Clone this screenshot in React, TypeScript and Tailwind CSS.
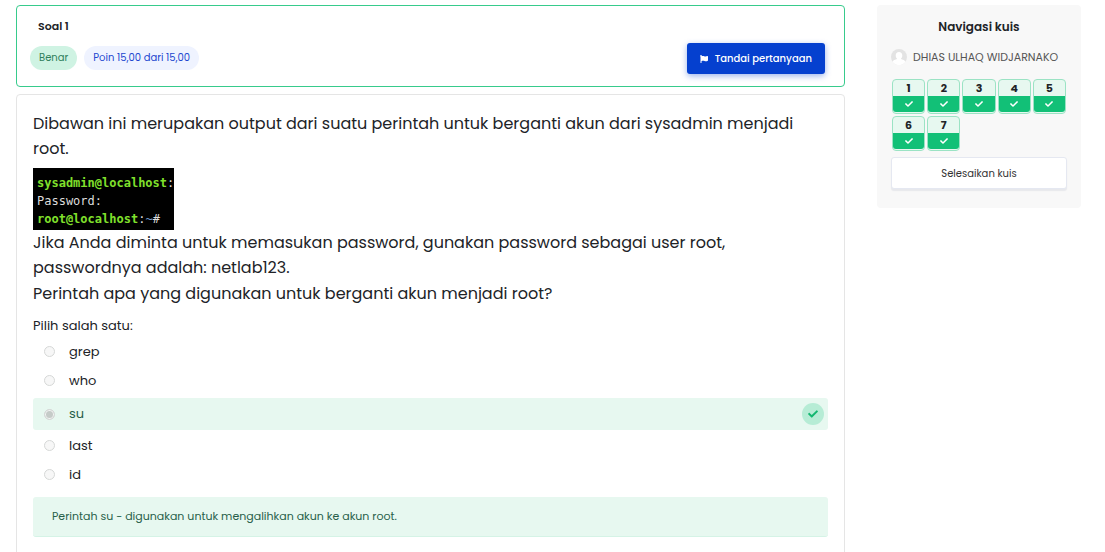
import React from "react";
import { FaCheck, FaFlag } from "react-icons/fa";

const options = ["grep", "who", "su", "last", "id"];
const answer = "su";
const questions = [1, 2, 3, 4, 5, 6, 7];

function QuestionInfo() {
  return (
    <header className="flex items-end justify-between rounded-[4px] border border-[#37cb8c] pt-3 pr-[19px] pb-3 pl-[13px]">
      <div className="pb-1">
        <h2 className="pl-2 text-[11px] leading-4 font-semibold">Soal 1</h2>
        <div className="mt-3 flex gap-[7px] text-[10px] leading-6">
          <span className="rounded-full bg-[#cff3e3] px-[9px] text-[#2f7f5c]">Benar</span>
          <span className="rounded-full bg-[#eff3ff] px-[9px] text-[#2347cf]">Poin 15,00 dari 15,00</span>
        </div>
      </div>
      <button
        type="button"
        className="flex h-[31px] items-center gap-[7px] rounded-[3px] bg-[#0540cf] px-[13px] text-[10px] font-medium text-white shadow-[0_2px_6px_rgba(5,64,207,0.4)]"
      >
        <FaFlag size={8} />
        Tandai pertanyaan
      </button>
    </header>
  );
}

function Terminal() {
  return (
    <div className="mt-[7px] h-[62px] w-[141px] overflow-hidden bg-black pt-[6px] pl-1 font-['DejaVu_Sans_Mono',monospace] text-[12px] leading-[18px] whitespace-nowrap text-[#dcdcdc]">
      <p>
        <b className="text-[#80e02c]">sysadmin@localhost</b>:
      </p>
      <p>Password:</p>
      <p>
        <b className="text-[#80e02c]">root@localhost</b>:<span className="text-[#7199c8]">~</span>#
      </p>
    </div>
  );
}

function Option({ text }: { text: string }) {
  const correct = text === answer;
  return (
    <label
      className={
        correct
          ? "mt-[3px] mb-px flex h-8 items-center rounded-[3px] bg-[#e7f8f0] pr-1 pl-[11px] text-[#285f4a]"
          : "flex h-[29px] items-center pl-[11px]"
      }
    >
      <input
        type="radio"
        name="answer"
        disabled
        defaultChecked={correct}
        className="size-[11px] appearance-none rounded-full border border-[#d6d8d7] bg-[#f7f7f7] checked:bg-[#c5cbc8] checked:shadow-[inset_0_0_0_1px_#f3f5f4]"
      />
      <span className="ml-[14px] flex-1">{text}</span>
      {correct && (
        <span className="flex size-[22px] items-center justify-center rounded-full bg-[#b6ecd5] text-[#12b76f]">
          <FaCheck size={10} />
        </span>
      )}
    </label>
  );
}

function Navigation() {
  return (
    <aside className="w-[204px] shrink-0 rounded-[4px] bg-[#f8f8f8] px-[14px] pt-[14px] pb-[19px]">
      <h2 className="text-center text-[12px] leading-4 font-semibold">Navigasi kuis</h2>
      <div className="mt-3 flex items-center gap-[6px] text-[11px] leading-5 whitespace-nowrap text-[#555]">
        <svg viewBox="0 0 16 16" className="size-4 shrink-0" aria-hidden="true">
          <circle cx="8" cy="8" r="8" fill="#e3e3e3" />
          <path d="M8 3c2 0 3.3 1.500 3.300 3.400 0 1.500-.7 2.700-1.500 3.400.5.9 3.800.8 4.600 3.100A8 8 0 0 1 1.600 12.900C2.400 10.600 5.700 10.700 6.200 9.800 5.400 9.100 4.700 7.900 4.700 6.400 4.700 4.500 6 3 8 3Z" fill="#fff" />
        </svg>
        DHIAS ULHAQ WIDJARNAKO
      </div>
      <nav className="mt-3 grid grid-cols-5 gap-[2px] pr-px pl-px">
        {questions.map((n) => (
          <a
            key={n}
            href={`#question-${n}`}
            className="flex h-[35px] flex-col rounded-[4px] border border-[#9be3c4] bg-[#e7f8f0] pb-px text-center text-[11px] leading-4 font-bold"
          >
            {n}
            <span className="flex flex-1 items-center justify-center rounded-b-[3px] bg-[#12c077] text-white">
              <FaCheck size={8} />
            </span>
          </a>
        ))}
      </nav>
      <button
        type="button"
        className="mt-[6px] h-8 w-full rounded-[3px] border border-[#e5e8f1] bg-white text-[10px] text-[#333] shadow-[0_2px_1px_#e7e8ec]"
      >
        Selesaikan kuis
      </button>
    </aside>
  );
}

export default function App() {
  return (
    <div className="flex h-screen items-start gap-8 overflow-hidden bg-white pt-[5px] pr-6 pl-4 font-[Poppins,Inter,sans-serif] text-[#212327]">
      <main className="min-w-0 flex-1">
        <QuestionInfo />
        <section className="mt-[7px] min-h-screen rounded-[4px] border border-[#e5e5e5] px-4 pt-4 pb-4">
          <div className="text-[16px] leading-[25px]">
            <p>Dibawan ini merupakan output dari suatu perintah untuk berganti akun dari sysadmin menjadi root.</p>
            <Terminal />
            <p>
              Jika Anda diminta untuk memasukan password, gunakan password sebagai user root,
              <br />
              passwordnya adalah: netlab123.
            </p>
            <p className="mt-px">Perintah apa yang digunakan untuk berganti akun menjadi root?</p>
          </div>
          <fieldset className="mt-[10px] text-[13px] leading-5">
            <legend>Pilih salah satu:</legend>
            <div className="pt-px">
              {options.map((text) => (
                <Option key={text} text={text} />
              ))}
            </div>
          </fieldset>
          <p className="mt-2 rounded-[3px] border-b border-[#d5f3e6] bg-[#e7f8f0] px-[19px] pt-[9px] pb-[10px] text-[11px] leading-5 text-[#285f4a]">
            Perintah su - digunakan untuk mengalihkan akun ke akun root.
          </p>
        </section>
      </main>
      <Navigation />
    </div>
  );
}
